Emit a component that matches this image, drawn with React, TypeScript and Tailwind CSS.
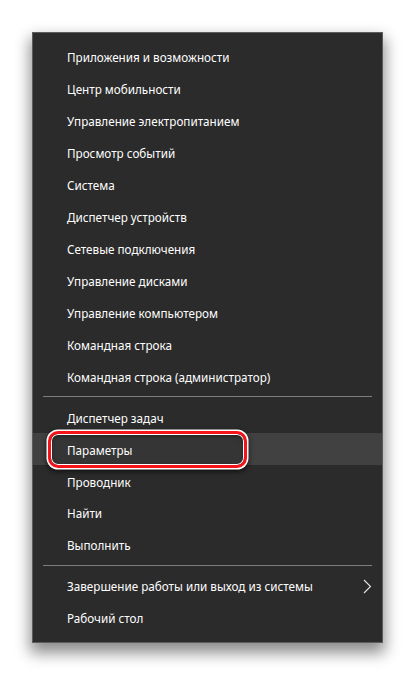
import React from "react";

const group1 = [
  "Приложения и возможности",
  "Центр мобильности",
  "Управление электропитанием",
  "Просмотр событий",
  "Система",
  "Диспетчер устройств",
  "Сетевые подключения",
  "Управление дисками",
  "Управление компьютером",
  "Командная строка",
  "Командная строка (администратор)",
];

const group2 = ["Диспетчер задач", "Параметры", "Проводник", "Найти", "Выполнить"];

function Item({ label, active, chevron }: { label: string; active?: boolean; chevron?: boolean }) {
  return (
    <div className={`relative flex h-8 items-center pl-[34px] pr-2 ${active ? "bg-[#414141]" : ""}`}>
      {active && (
        <div className="absolute left-[15px] top-[-2px] h-[37px] w-[199px] rounded-[10px] border-[3px] border-[#f5141a] bg-[#353535] shadow-[0_0_0_1.5px_#ffffff,inset_0_0_0_1px_#ffffff,inset_0_2px_4px_rgba(0,0,0,0.5),0_2px_5px_2px_rgba(0,0,0,0.55)]" />
      )}
      <span className="relative z-10 pt-[2px] text-[11.7px] leading-none text-white">{label}</span>
      {chevron && (
        <svg className="absolute right-[10px] top-[9px]" width="9" height="15" viewBox="0 0 9 15" fill="none">
          <polyline points="1,1 7.5,7.5 1,14" stroke="#e6e6e6" strokeWidth="1.1" />
        </svg>
      )}
    </div>
  );
}

function Sep() {
  return (
    <div className="flex h-[9px] items-center px-[10px]">
      <div className="h-px w-full bg-[#7e7e7e]" />
    </div>
  );
}

export default function App() {
  return (
    <div className="h-[676px] w-[416px] bg-white pl-[32px] pt-[32px]" style={{ fontFamily: '"Noto Sans", "Open Sans", sans-serif' }}>
      <div className="flex h-[611px] w-[351px] flex-col border border-[#5c5c5c] bg-[#2b2b2b] py-[8px] shadow-[0_8px_14px_2px_rgba(0,0,0,0.45)]">
        {group1.map((t) => (
          <Item key={t} label={t} />
        ))}
        <Sep />
        {group2.map((t) => (
          <Item key={t} label={t} active={t === "Параметры"} />
        ))}
        <Sep />
        <Item label="Завершение работы или выход из системы" chevron />
        <Item label="Рабочий стол" />
      </div>
    </div>
  );
}
